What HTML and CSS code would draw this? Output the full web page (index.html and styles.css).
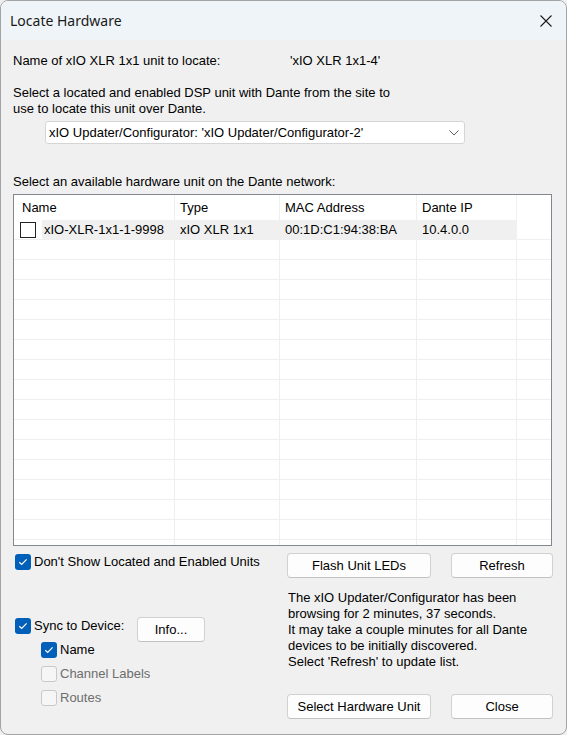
FILE: index.html
```html
<!DOCTYPE html>
<html lang="en">
<head>
<meta charset="utf-8">
<title>Locate Hardware</title>
<link rel="stylesheet" href="styles.css">
</head>
<body>
<div class="window">
  <div class="titlebar">
    <span class="title">Locate Hardware</span>
    <svg class="close" width="12" height="12" viewBox="0 0 12 12"><path d="M0.5 0.5L11.5 11.5M11.5 0.5L0.5 11.5" stroke="#1b1b1b" stroke-width="1.1" fill="none"/></svg>
  </div>

  <div class="content">
    <div class="unit-row">
      <span class="unit-label">Name of xIO XLR 1x1 unit to locate:</span>
      <span>'xIO XLR 1x1-4'</span>
    </div>

    <p class="intro">Select a located and enabled DSP unit with Dante from the site to<br>use to locate this unit over Dante.</p>

    <div class="select">
      <span>xIO Updater/Configurator: 'xIO Updater/Configurator-2'</span>
      <svg width="10" height="6" viewBox="0 0 10 6"><path d="M0.5 0.5L5 5L9.5 0.5" stroke="#5f5f5f" stroke-width="1" fill="none"/></svg>
    </div>

    <div class="list-label">Select an available hardware unit on the Dante network:</div>

    <div class="list">
      <div class="row head">
        <div class="cell">Name</div>
        <div class="cell">Type</div>
        <div class="cell">MAC Address</div>
        <div class="cell">Dante IP</div>
        <div class="cell"></div>
      </div>
      <div class="row selected">
        <div class="cell name"><span class="box"></span><span class="sel">xIO-XLR-1x1-1-9998</span></div>
        <div class="cell">xIO XLR 1x1</div>
        <div class="cell">00:1D:C1:94:38:BA</div>
        <div class="cell">10.4.0.0</div>
        <div class="cell"></div>
      </div>
      <div class="row"><div class="cell"></div><div class="cell"></div><div class="cell"></div><div class="cell"></div><div class="cell"></div></div>
      <div class="row"><div class="cell"></div><div class="cell"></div><div class="cell"></div><div class="cell"></div><div class="cell"></div></div>
      <div class="row"><div class="cell"></div><div class="cell"></div><div class="cell"></div><div class="cell"></div><div class="cell"></div></div>
      <div class="row"><div class="cell"></div><div class="cell"></div><div class="cell"></div><div class="cell"></div><div class="cell"></div></div>
      <div class="row"><div class="cell"></div><div class="cell"></div><div class="cell"></div><div class="cell"></div><div class="cell"></div></div>
      <div class="row"><div class="cell"></div><div class="cell"></div><div class="cell"></div><div class="cell"></div><div class="cell"></div></div>
      <div class="row"><div class="cell"></div><div class="cell"></div><div class="cell"></div><div class="cell"></div><div class="cell"></div></div>
      <div class="row"><div class="cell"></div><div class="cell"></div><div class="cell"></div><div class="cell"></div><div class="cell"></div></div>
      <div class="row"><div class="cell"></div><div class="cell"></div><div class="cell"></div><div class="cell"></div><div class="cell"></div></div>
      <div class="row"><div class="cell"></div><div class="cell"></div><div class="cell"></div><div class="cell"></div><div class="cell"></div></div>
      <div class="row"><div class="cell"></div><div class="cell"></div><div class="cell"></div><div class="cell"></div><div class="cell"></div></div>
      <div class="row"><div class="cell"></div><div class="cell"></div><div class="cell"></div><div class="cell"></div><div class="cell"></div></div>
      <div class="row"><div class="cell"></div><div class="cell"></div><div class="cell"></div><div class="cell"></div><div class="cell"></div></div>
      <div class="row"><div class="cell"></div><div class="cell"></div><div class="cell"></div><div class="cell"></div><div class="cell"></div></div>
      <div class="row"><div class="cell"></div><div class="cell"></div><div class="cell"></div><div class="cell"></div><div class="cell"></div></div>
      <div class="row"><div class="cell"></div><div class="cell"></div><div class="cell"></div><div class="cell"></div><div class="cell"></div></div>
    </div>

    <div class="bottom">
      <div class="options">
        <label class="check top-check">
          <span class="cb on"><svg width="16" height="16" viewBox="0 0 16 16"><path d="M4.3 8.2L6.7 10.5L11.6 5.4" stroke="#fff" stroke-width="1.2" fill="none"/></svg></span>
          <span>Don't Show Located and Enabled Units</span>
        </label>

        <div class="sync-row">
          <label class="check sync-check">
            <span class="cb on"><svg width="16" height="16" viewBox="0 0 16 16"><path d="M4.3 8.2L6.7 10.5L11.6 5.4" stroke="#fff" stroke-width="1.2" fill="none"/></svg></span>
            <span>Sync to Device:</span>
          </label>
          <button class="btn info">Info...</button>
        </div>

        <div class="sub">
          <label class="check">
            <span class="cb on"><svg width="16" height="16" viewBox="0 0 16 16"><path d="M4.3 8.2L6.7 10.5L11.6 5.4" stroke="#fff" stroke-width="1.2" fill="none"/></svg></span>
            <span>Name</span>
          </label>
          <label class="check disabled">
            <span class="cb off"></span>
            <span>Channel Labels</span>
          </label>
          <label class="check disabled">
            <span class="cb off"></span>
            <span>Routes</span>
          </label>
        </div>
      </div>

      <div class="actions">
        <div class="btn-row">
          <button class="btn wide">Flash Unit LEDs</button>
          <button class="btn narrow">Refresh</button>
        </div>
        <p class="status">The xIO Updater/Configurator has been<br>browsing for 2 minutes, 37 seconds.<br>It may take a couple minutes for all Dante<br>devices to be initially discovered.<br>Select 'Refresh' to update list.</p>
        <div class="btn-row end">
          <button class="btn wide">Select Hardware Unit</button>
          <button class="btn narrow">Close</button>
        </div>
      </div>
    </div>
  </div>
</div>
</body>
</html>
```

FILE: styles.css
```css
* { box-sizing: border-box; }

html, body {
  margin: 0;
  padding: 0;
}

body {
  width: 567px;
  height: 735px;
  background: #f0f0f0;
  font-family: "Liberation Sans", Arial, sans-serif;
  font-size: 13px;
  line-height: 16px;
  color: #000;
}

.window {
  width: 567px;
  height: 735px;
  border: 1px solid #a3a3a3;
  border-radius: 8px;
  overflow: hidden;
  background: #f0f0f0;
}

/* title bar */
.titlebar {
  height: 39px;
  background: #eff4f9;
  display: flex;
  align-items: center;
  justify-content: space-between;
  padding: 0 14px 0 9px;
}

.title {
  font-family: "Noto Sans", "Liberation Sans", sans-serif;
  font-size: 14px;
  color: #1a1a1a;
}

.close { display: block; }

/* dialog body */
.content {
  padding: 13px 14px 0 12px;
}

.unit-row { display: flex; }
.unit-label { width: 277px; }

.intro { margin: 16px 0 0; }

.select {
  margin: 4px 0 0 32px;
  width: 420px;
  height: 23px;
  background: #fff;
  border: 1px solid #d5d5d5;
  border-radius: 3px;
  display: flex;
  align-items: center;
  justify-content: space-between;
  padding: 0 5px 0 3px;
}

.select svg { display: block; }

.list-label { margin-top: 30px; }

/* device list */
.list {
  margin-top: 4px;
  height: 352px;
  background: #fff;
  border: 1px solid #828790;
  overflow: hidden;
}

.row {
  display: grid;
  grid-template-columns: 161px 105px 137px 100px 34px;
  height: 20px;
  border-bottom: 1px solid #efefef;
}

.row.head {
  height: 25px;
  border-bottom: 0;
}

.cell {
  border-right: 1px solid #efefef;
  padding-left: 5px;
  display: flex;
  align-items: center;
  white-space: nowrap;
  overflow: hidden;
}

.cell:last-child { border-right: 0; }

.head .cell:first-child { padding-left: 8px; }

.row.selected { border-bottom-color: #f0f0f0; }

.row.selected .cell {
  background: #f0f0f0;
  border-right-color: #f0f0f0;
}

.row.selected .cell.name {
  background: #fff;
  padding-left: 6px;
}

.row.selected .cell:last-child { background: #fff; }

.box {
  width: 16px;
  height: 16px;
  flex: none;
  border: 1px solid #222;
  background: #fff;
}

.sel {
  flex: 1;
  align-self: stretch;
  display: flex;
  align-items: center;
  background: #f0f0f0;
  margin-left: 6px;
  padding-left: 2px;
}

/* lower panel */
.bottom {
  display: grid;
  grid-template-columns: 274px 265px;
}

.options { padding-top: 8px; }

.check {
  display: flex;
  align-items: center;
  gap: 3px;
  height: 16px;
}

.cb {
  width: 16px;
  height: 16px;
  border-radius: 3px;
  flex: none;
}

.cb svg { display: block; }

.cb.on { background: #005fb8; }

.cb.off {
  background: #f6f6f6;
  border: 1px solid #c9c9c9;
}

.check.disabled { color: #6d6d6d; }

.top-check { margin-left: 2px; }

.sync-row {
  display: flex;
  align-items: flex-start;
  margin-top: 47px;
}

.sync-check {
  width: 122px;
  margin: 1px 0 0 2px;
}

.sub { margin-left: 28px; }
.sub .check + .check { margin-top: 8px; }

.btn {
  flex: none;
  height: 25px;
  padding: 0;
  background: #fdfdfd;
  border: 1px solid #d1d1d1;
  border-bottom-color: #c2c2c2;
  border-radius: 4px;
  font: inherit;
  color: #000;
  display: flex;
  align-items: center;
  justify-content: center;
}

.btn.info { width: 68px; }
.btn.wide { width: 144px; }
.btn.narrow { width: 102px; }

.actions { padding-top: 7px; }

.btn-row {
  display: flex;
  gap: 20px;
}

.btn-row.end { margin-top: 24px; }

.status { margin: 12px 0 0 1px; }
```
